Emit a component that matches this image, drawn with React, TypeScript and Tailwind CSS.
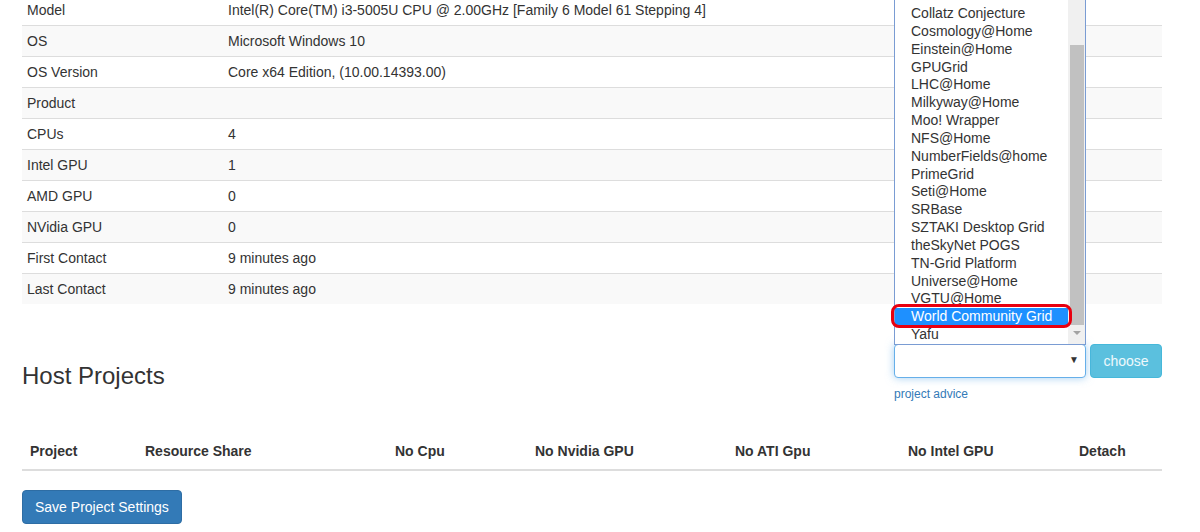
import React from "react";

const hostInfo = [
  { label: "Model", value: "Intel(R) Core(TM) i3-5005U CPU @ 2.00GHz [Family 6 Model 61 Stepping 4]" },
  { label: "OS", value: "Microsoft Windows 10" },
  { label: "OS Version", value: "Core x64 Edition, (10.00.14393.00)" },
  { label: "Product", value: "" },
  { label: "CPUs", value: "4" },
  { label: "Intel GPU", value: "1" },
  { label: "AMD GPU", value: "0" },
  { label: "NVidia GPU", value: "0" },
  { label: "First Contact", value: "9 minutes ago" },
  { label: "Last Contact", value: "9 minutes ago" },
];

const projects = [
  "Collatz Conjecture",
  "Cosmology@Home",
  "Einstein@Home",
  "GPUGrid",
  "LHC@Home",
  "Milkyway@Home",
  "Moo! Wrapper",
  "NFS@Home",
  "NumberFields@home",
  "PrimeGrid",
  "Seti@Home",
  "SRBase",
  "SZTAKI Desktop Grid",
  "theSkyNet POGS",
  "TN-Grid Platform",
  "Universe@Home",
  "VGTU@Home",
  "World Community Grid",
  "Yafu",
];

const columns = [
  { name: "Project", w: "w-[115px]" },
  { name: "Resource Share", w: "w-[250px]" },
  { name: "No Cpu", w: "w-[140px]" },
  { name: "No Nvidia GPU", w: "w-[200px]" },
  { name: "No ATI Gpu", w: "w-[173px]" },
  { name: "No Intel GPU", w: "w-[171px]" },
  { name: "Detach", w: "w-[91px]" },
];

const App = () => {
  return (
    <div className="relative w-[1200px] h-[532px] overflow-hidden bg-white pl-[22px] text-[14px] text-[#333] font-['Liberation_Sans',Arial,sans-serif]">
      <div className="w-[1140px]">
        {/* Host details table */}
        <table className="w-[1140px] mt-[-5px] border-collapse table-fixed">
          <tbody>
            {hostInfo.map((row, i) => (
              <tr key={row.label} className={i % 2 === 1 ? "bg-[#f9f9f9]" : "bg-white"}>
                <td className={`w-[201px] px-[5px] py-[5px] leading-[20px] ${i > 0 ? "border-t border-[#ddd]" : ""}`}>{row.label}</td>
                <td className={`px-[5px] py-[5px] leading-[20px] ${i > 0 ? "border-t border-[#ddd]" : ""}`}>{row.value}</td>
              </tr>
            ))}
          </tbody>
        </table>

        {/* Heading + add project form */}
        <div className="flex justify-between">
          <h3 className="mt-[59px] text-[24px] leading-[26.4px] font-normal">Host Projects</h3>
          <div className="mt-[40px] w-[268px]">
            <div className="flex gap-[4px]">
              <div className="relative w-[192px] h-[34px] rounded-[4px] border border-[#66afe9] bg-white shadow-[0_0_8px_rgba(102,175,233,0.6)]">
                <span className="absolute right-[6px] top-[9px] text-[10px] leading-[12px] text-[#333]">▼</span>
              </div>
              <button className="w-[72px] h-[34px] rounded-[4px] border border-[#46b8da] bg-[#5bc0de] text-white/90 leading-[20px]">choose</button>
            </div>
            <a className="block mt-[9px] text-[12px] leading-[14px] text-[#337ab7]">project advice</a>
          </div>
        </div>

        {/* Host projects table */}
        <table className="w-[1140px] mt-[32px] border-collapse table-fixed">
          <thead>
            <tr>
              {columns.map((c) => (
                <th key={c.name} className={`${c.w} text-left font-bold px-[8px] py-[8px] leading-[20px] border-b-2 border-[#ddd]`}>{c.name}</th>
              ))}
            </tr>
          </thead>
        </table>

        <button className="mt-[19px] h-[34px] px-[12px] rounded-[4px] border border-[#2e6da4] bg-[#337ab7] text-white leading-[20px]">
          Save Project Settings
        </button>
      </div>

      {/* Open select listbox */}
      <div className="absolute left-[894px] top-0 w-[192px] h-[345px] border-x border-b border-[#7a9cd3] bg-white overflow-hidden flex">
        <div className="flex-1 flex flex-col justify-end">
          {projects.map((p) => (
            <div
              key={p}
              className={`h-[17.85px] leading-[17.85px] pl-[16px] whitespace-nowrap ${p === "World Community Grid" ? "bg-[#1e90ff] text-white" : "text-[#333]"}`}
            >
              {p}
            </div>
          ))}
        </div>
        {/* Scrollbar */}
        <div className="relative w-[17px] bg-[#f0f0f0]">
          <div className="absolute left-[2px] right-[1px] top-[45px] h-[280px] bg-[#c1c1c1]"></div>
          <div className="absolute left-[5px] top-[331px] w-0 h-0 border-l-[4px] border-r-[4px] border-t-[4px] border-l-transparent border-r-transparent border-t-[#a3a3a3]"></div>
        </div>
      </div>

      {/* Red highlight around selected option */}
      <div className="absolute left-[891px] top-[304px] w-[181px] h-[24px] rounded-[8px] border-[3px] border-[#e8000f]"></div>
    </div>
  );
};

export default App;
